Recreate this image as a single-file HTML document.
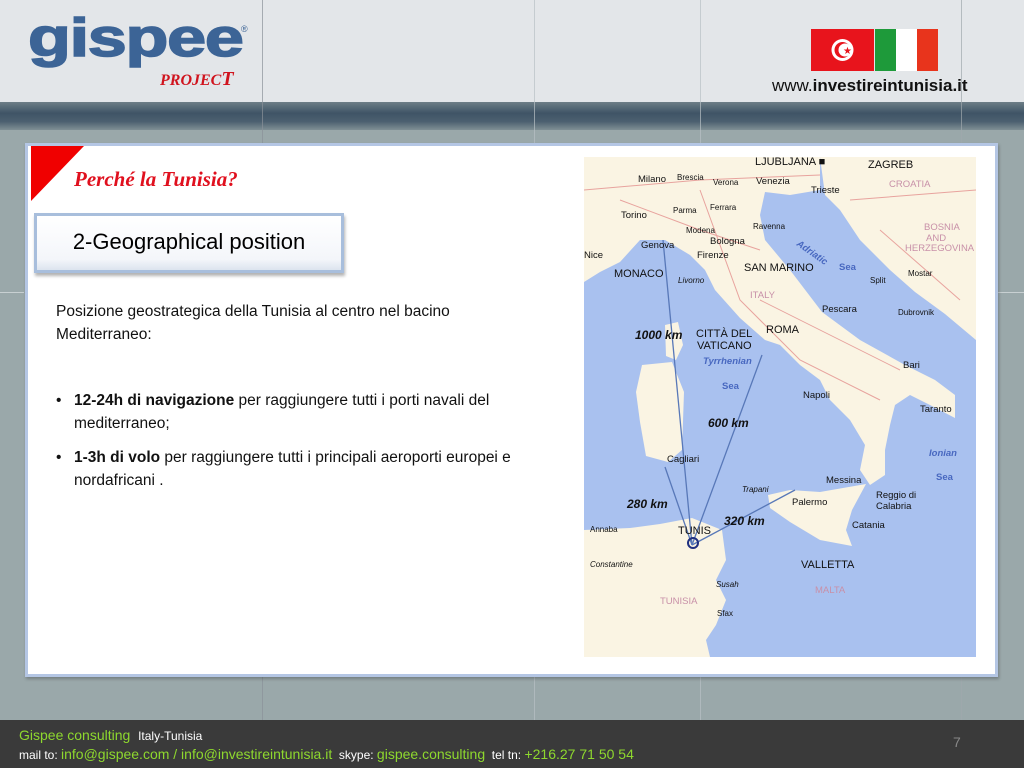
<!DOCTYPE html>
<html><head><meta charset="utf-8"><style>
*{margin:0;padding:0;box-sizing:border-box}
body{width:1024px;height:768px;position:relative;overflow:hidden;background:#98a6a8;font-family:"Liberation Sans",sans-serif}
.abs{position:absolute}
.vl{position:absolute;width:1px;background:#dfe5e6;opacity:.7}
</style></head><body>
<div class="abs" style="left:0;top:0;width:1024px;height:102px;background:#e3e6e9"></div>
<div class="abs" style="left:0;top:102px;width:1024px;height:28px;background:linear-gradient(#6d7e86,#3f5466 40%,#4c6070 70%,#7f8f94)"></div>
<div class="abs" style="left:0;top:130px;width:1024px;height:590px;background:#9aa8aa"></div>
<div class="vl" style="left:262px;top:0;height:720px;background:#8a9298"></div>
<div class="vl" style="left:534px;top:0;height:720px;background:#b8c0c4"></div>
<div class="vl" style="left:700px;top:0;height:720px;background:#b8c0c4"></div>
<div class="vl" style="left:961px;top:0;height:720px;background:#a0a8ac"></div>
<div class="abs" style="left:0;top:292px;width:24px;height:1px;background:#c8d0d2"></div>
<div class="abs" style="left:998px;top:292px;width:26px;height:1px;background:#c8d0d2"></div>
<!-- logo -->
<div class="abs" style="left:28px;top:10px;font:900 54px/56px 'Liberation Sans',sans-serif;color:#3c6496;letter-spacing:-1px;transform:scaleX(1.3);transform-origin:left;-webkit-text-stroke:1.5px #3c6496">gispee</div>
<div class="abs" style="left:241px;top:24px;font-size:9px;color:#3c6496">®</div>
<div class="abs" style="left:160px;top:68px;font:italic bold 16px 'Liberation Serif',serif;color:#d0141e">PROJEC<span style="font-size:20px">T</span></div>
<!-- flags -->
<div class="abs" style="left:811px;top:29px;width:63px;height:42px;background:#e8141c"></div>
<svg class="abs" style="left:811px;top:29px" width="63" height="42"><circle cx="31.5" cy="21" r="11" fill="#fff"/><circle cx="31.5" cy="21" r="8" fill="#e8141c"/><circle cx="34" cy="21" r="6.5" fill="#fff"/><text x="32" y="25" font-size="10" fill="#e8141c" font-family="DejaVu Sans">★</text></svg>
<div class="abs" style="left:875px;top:29px;width:21px;height:42px;background:#1e9a3a"></div>
<div class="abs" style="left:896px;top:29px;width:21px;height:42px;background:#fff"></div>
<div class="abs" style="left:917px;top:29px;width:21px;height:42px;background:#e8341c"></div>
<div class="abs" style="left:772px;top:76px;font-size:17px;color:#111">www.<b>investireintunisia.it</b></div>
<!-- panel -->
<div class="abs" style="left:25px;top:143px;width:973px;height:534px;background:#fff;border:3px solid #b4c6e4;box-shadow:1px 2px 3px rgba(0,0,0,.25)"></div>
<svg class="abs" style="left:31px;top:146px" width="56" height="56"><polygon points="0,0 53,0 0,55" fill="#f00000"/></svg>
<div class="abs" style="left:74px;top:167px;font:italic bold 21px 'Liberation Serif',serif;color:#e0101e">Perché la Tunisia?</div>
<div class="abs" style="left:34px;top:213px;width:310px;height:60px;background:linear-gradient(#fff,#f4f6fa 80%,#dce4ef);border:3px solid #a8bedc;box-shadow:1px 3px 3px rgba(0,0,0,.3)"></div>
<div class="abs" style="left:34px;top:229px;width:310px;text-align:center;font-size:22px;color:#000">2-Geographical position</div>
<div class="abs" style="left:56px;top:300px;width:480px;font-size:15.5px;line-height:23px;color:#111">
<div>Posizione geostrategica della Tunisia al centro nel bacino Mediterraneo:</div>
<div style="height:43px"></div>
<div style="position:relative;padding-left:18px">
<span style="position:absolute;left:0">•</span><b>12-24h di navigazione</b> per raggiungere tutti i porti navali del mediterraneo;</div>
<div style="position:relative;padding-left:18px;margin-top:11px">
<span style="position:absolute;left:0">•</span><b>1-3h di volo</b> per raggiungere tutti i principali aeroporti europei e nordafricani .</div>
</div>
<!-- map -->
<svg class="abs" style="left:584px;top:157px" width="392" height="500" viewBox="584 157 392 500" font-family="Liberation Sans,sans-serif">
<rect x="584" y="157" width="392" height="500" fill="#a9c1ef"/>
<polygon fill="#faf4e3" points="584,157 820,157 820,190 790,195 765,192 760,215 765,240 790,270 822,312 860,340 905,365 935,380 955,395 955,418 930,405 910,395 895,405 890,425 885,450 885,475 870,485 860,470 865,445 850,420 830,400 820,380 800,365 780,345 765,340 740,318 715,290 705,270 690,255 665,240 640,240 620,262 600,272 584,282"/>
<polygon fill="#faf4e3" points="820,157 976,157 976,340 945,314 915,292 890,270 860,240 840,210 825,195"/>
<polygon fill="#faf4e3" points="642,365 672,362 684,392 682,450 668,462 646,456 640,422 636,392"/>
<polygon fill="#faf4e3" points="665,325 678,322 683,345 676,360 666,356"/>
<polygon fill="#faf4e3" points="768,495 790,490 820,492 866,484 852,510 846,530 852,546 820,540 790,522 770,508"/>
<polygon fill="#faf4e3" points="584,530 630,528 660,524 692,518 722,530 726,560 716,580 726,600 716,625 706,640 710,657 584,657"/>
<g stroke="#e08080" stroke-width="1" fill="none" opacity=".7">
<path d="M584,190 L700,180 L820,175 M620,200 L700,230 L760,250 M700,190 L740,300 L800,360 L880,400 M760,300 L900,370 M850,200 L976,190 M880,230 L960,300"/>
</g>
<g stroke="#5878b8" stroke-width="1.3" fill="#5878b8">
<line x1="692" y1="545" x2="663" y2="240"/><line x1="692" y1="545" x2="762" y2="355"/><line x1="692" y1="545" x2="665" y2="467"/><line x1="692" y1="545" x2="795" y2="490"/>
</g>
<circle cx="693" cy="543" r="5" fill="none" stroke="#203080" stroke-width="2"/>
<g font-size="9.5" fill="#111">
<text x="755" y="165" font-size="11">LJUBLJANA ■</text><text x="868" y="168" font-size="11">ZAGREB</text>
<text x="638" y="182">Milano</text><text x="677" y="180" font-size="8">Brescia</text><text x="713" y="185" font-size="8">Verona</text><text x="756" y="184">Venezia</text>
<text x="811" y="193">Trieste</text><text x="889" y="187" fill="#c890a8">CROATIA</text>
<text x="621" y="218">Torino</text><text x="673" y="213" font-size="8">Parma</text><text x="710" y="210" font-size="8">Ferrara</text>
<text x="686" y="233" font-size="8">Modena</text><text x="710" y="244">Bologna</text><text x="753" y="229" font-size="8">Ravenna</text>
<text x="641" y="248">Genova</text><text x="697" y="258">Firenze</text><text x="744" y="271" font-size="11">SAN MARINO</text>
<text x="584" y="258">Nice</text><text x="614" y="277" font-size="11">MONACO</text><text x="678" y="283" font-size="8" font-style="italic">Livorno</text>
<text x="750" y="298" fill="#c890a8">ITALY</text><text x="822" y="312">Pescara</text><text x="898" y="315" font-size="8">Dubrovnik</text>
<text x="696" y="337" font-size="11">CITTÀ DEL</text><text x="697" y="349" font-size="11">VATICANO</text><text x="766" y="333" font-size="11">ROMA</text>
<text x="703" y="364" fill="#4868c0" font-weight="bold" font-style="italic">Tyrrhenian</text><text x="722" y="389" fill="#4868c0" font-weight="bold">Sea</text>
<text x="903" y="368">Bari</text><text x="803" y="398">Napoli</text><text x="920" y="412">Taranto</text>
<text x="929" y="456" fill="#4868c0" font-weight="bold" font-style="italic">Ionian</text><text x="936" y="480" fill="#4868c0" font-weight="bold">Sea</text>
<text x="667" y="462">Cagliari</text><text x="826" y="483">Messina</text><text x="876" y="498">Reggio di</text><text x="876" y="509">Calabria</text>
<text x="742" y="492" font-size="8" font-style="italic">Trapani</text><text x="792" y="505">Palermo</text><text x="852" y="528">Catania</text>
<text x="590" y="532" font-size="8">Annaba</text><text x="678" y="534" font-size="11">TUNIS</text>
<text x="590" y="567" font-size="8" font-style="italic">Constantine</text><text x="716" y="587" font-size="8" font-style="italic">Susah</text>
<text x="801" y="568" font-size="11">VALLETTA</text><text x="815" y="593" fill="#c890a8">MALTA</text>
<text x="660" y="604" fill="#c890a8">TUNISIA</text><text x="717" y="616" font-size="8">Sfax</text>
<text x="796" y="245" fill="#4868c0" font-weight="bold" font-style="italic" transform="rotate(35 796 245)">Adriatic</text>
<text x="839" y="270" fill="#4868c0" font-weight="bold">Sea</text>
<text x="924" y="230" fill="#c890a8">BOSNIA</text><text x="926" y="241" fill="#c890a8">AND</text><text x="905" y="251" fill="#c890a8">HERZEGOVINA</text>
<text x="908" y="276" font-size="8">Mostar</text><text x="870" y="283" font-size="8">Split</text>
</g>
<g font-size="12" font-weight="bold" font-style="italic" fill="#111">
<text x="635" y="339">1000 km</text><text x="708" y="427">600 km</text><text x="627" y="508">280 km</text><text x="724" y="525">320 km</text>
</g>
</svg>
<!-- footer -->
<div class="abs" style="left:0;top:720px;width:1024px;height:48px;background:#3a3a3a"></div>
<div class="abs" style="left:19px;top:727px;font-size:14px;color:#8ed82e;white-space:nowrap">Gispee consulting &nbsp;<span style="color:#fff;font-size:12px">Italy-Tunisia</span></div>
<div class="abs" style="left:19px;top:746px;font-size:12px;color:#fff;white-space:nowrap">mail to: <span style="color:#8ed82e;font-size:14px">info@gispee.com / info@investireintunisia.it</span> &nbsp;skype: <span style="color:#8ed82e;font-size:14px">gispee.consulting</span> &nbsp;tel tn: <span style="color:#8ed82e;font-size:14px">+216.27 71 50 54</span></div>
<div class="abs" style="left:953px;top:734px;font-size:14px;color:#888">7</div>
</body></html>
